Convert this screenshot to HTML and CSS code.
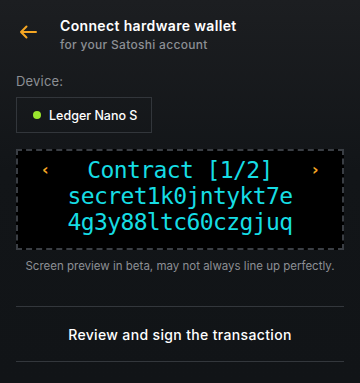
FILE: index.html
```html
<!DOCTYPE html>
<html lang="en">
<head>
  <meta charset="UTF-8">
  <meta name="viewport" content="width=device-width, initial-scale=1.0">
  <title>Connect hardware wallet</title>
  <link rel="stylesheet" href="styles.css">
</head>
<body>
  <div class="page">
    <header class="header">
      <button class="back-btn" aria-label="Back">
        <svg width="18" height="14" viewBox="0 0 18 14" fill="none">
          <path d="M17 7H2M7.5 1.5L2 7l5.5 5.5" stroke="#f5a623" stroke-width="2" stroke-linecap="round" stroke-linejoin="round"/>
        </svg>
      </button>
      <div class="header-text">
        <div class="title">Connect hardware wallet</div>
        <div class="subtitle">for your Satoshi account</div>
      </div>
    </header>

    <div class="label">Device:</div>
    <div class="device-row">
      <div class="device">
        <span class="dot"></span>
        <span>Ledger Nano S</span>
      </div>
    </div>

    <div class="screen">
      <div class="screen-line first">
        <span class="nav">&lsaquo;</span>
        <span class="screen-title">Contract [1/2]</span>
        <span class="nav">&rsaquo;</span>
      </div>
      <div class="screen-line">secret1k0jntykt7e</div>
      <div class="screen-line">4g3y88ltc60czgjuq</div>
    </div>
    <p class="note">Screen preview in beta, may not always line up perfectly.</p>

    <div class="action">Review and sign the transaction</div>
  </div>
</body>
</html>
```

FILE: styles.css
```css
html, body {
  margin: 0;
  height: 100%;
}

body {
  background: linear-gradient(180deg, #1c1e21 0%, #121518 45%, #111417 100%);
  color: #ffffff;
  font-family: "Inter", "Noto Sans", sans-serif;
}

.page {
  padding: 0 16px;
}

.header {
  display: flex;
  align-items: flex-start;
  padding-top: 17px;
}

.back-btn {
  background: none;
  border: none;
  padding: 0;
  width: 44px;
  height: 30px;
  display: flex;
  align-items: center;
  padding-left: 3px;
  cursor: pointer;
}

.title {
  font-size: 14px;
  font-weight: 600;
  line-height: 18px;
  letter-spacing: 0.35px;
}

.subtitle {
  font-size: 12px;
  font-weight: 500;
  color: #8c8f94;
  line-height: 18px;
  margin-top: 1px;
  letter-spacing: 0.3px;
}

.label {
  margin-top: 18px;
  font-size: 13px;
  color: #8c8f94;
  line-height: 18px;
  letter-spacing: 0.2px;
}

.device-row {
  display: flex;
  margin-top: 7px;
}

.device {
  display: flex;
  align-items: center;
  gap: 8px;
  height: 34px;
  padding: 0 14px 0 16px;
  border: 1px solid #32363b;
  font-size: 12.5px;
  font-weight: 500;
}

.dot {
  width: 8px;
  height: 8px;
  border-radius: 50%;
  background: #9ae62e;
}

.screen {
  margin-top: 16px;
  height: 90px;
  padding-bottom: 7px;
  border: 2px dashed #3a3e44;
  background: #000000;
  display: flex;
  flex-direction: column;
  align-items: center;
  justify-content: center;
  color: #16dde4;
  font-family: "DejaVu Sans Mono", "Liberation Mono", monospace;
  font-size: 23px;
  line-height: 26px;
  letter-spacing: -0.6px;
}

.screen-line.first {
  align-self: stretch;
  display: flex;
  justify-content: space-between;
  align-items: center;
  padding: 0 24px;
}

.nav {
  color: #f5a623;
  font-family: "DejaVu Sans", sans-serif;
  font-size: 16px;
  font-weight: 700;
}

.note {
  margin: 8px 0 0;
  text-align: center;
  font-size: 11.5px;
  color: #8c8f94;
  line-height: 16px;
}

.action {
  margin-top: 32px;
  height: 54px;
  border-top: 1px solid #33373c;
  border-bottom: 1px solid #33373c;
  display: flex;
  align-items: center;
  justify-content: center;
  font-size: 14px;
  font-weight: 500;
  letter-spacing: 0.35px;
}
```
